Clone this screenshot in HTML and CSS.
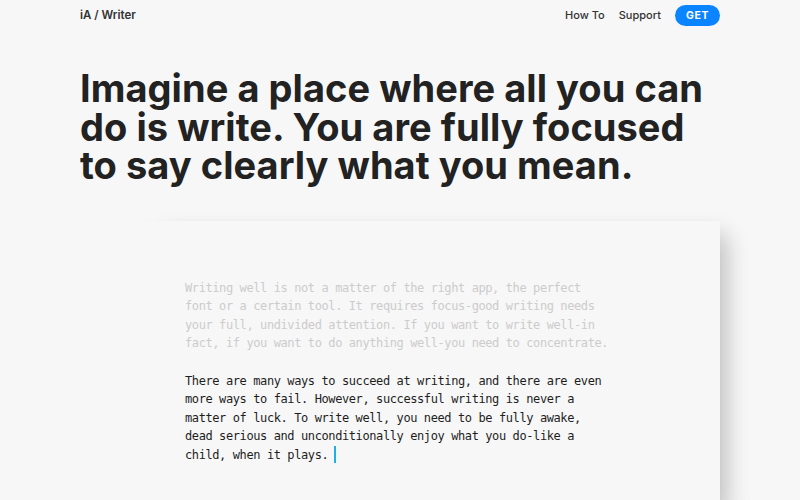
FILE: index.html
```html
<!DOCTYPE html>
<html lang="en">
<head>
  <meta charset="UTF-8" />
  <meta name="viewport" content="width=device-width, initial-scale=1.0"/>
  <title>iA Writer</title>
  <link rel="stylesheet" href="styles.css">
</head>
<body>
  <header class="topbar">
    <a class="brand" href="#">iA / Writer</a>
    <nav class="menu">
      <a href="#">How To</a>
      <a href="#">Support</a>
      <a class="get" href="#">GET</a>
    </nav>
  </header>

  <h1 class="headline">Imagine a place where all you can do is write. You are fully focused to say clearly what you mean.</h1>

  <section class="sheet">
    <div class="doc">
      <p class="faded">Writing well is not a matter of the right app, the perfect font or a certain tool. It requires focus-good writing needs your full, undivided attention. If you want to write well-in fact, if you want to do anything well-you need to concentrate.</p>
      <p class="current">There are many ways to succeed at writing, and there are even more ways to fail. However, successful writing is never a matter of luck. To write well, you need to be fully awake, dead serious and unconditionally enjoy what you do-like a child, when it plays.<span class="caret"></span></p>
    </div>
  </section>
</body>
</html>
```

FILE: styles.css
```css
body {
  margin: 0;
  background: #f7f7f7;
  color: #222;
  font-family: Inter, "Noto Sans", sans-serif;
  overflow: hidden;
}

a {
  color: inherit;
  text-decoration: none;
}

.topbar {
  display: flex;
  justify-content: space-between;
  align-items: center;
  padding: 5px 80px 0;
  height: 20px;
}

.brand {
  font-size: 11.5px;
  font-weight: 600;
  color: #333;
}

.menu {
  display: flex;
  align-items: center;
  gap: 14px;
  font-size: 11px;
  font-weight: 500;
  color: #333;
}

.get {
  background: #0a84ff;
  color: #fff;
  font-weight: 700;
  font-size: 10.5px;
  letter-spacing: 0.6px;
  padding: 0 11px;
  height: 21px;
  line-height: 21px;
  border-radius: 11px;
}

.headline {
  margin: 44px 80px 0;
  font-size: 38px;
  line-height: 38.5px;
  font-weight: 700;
  letter-spacing: 0.05px;
  color: #222;
}

/* the editor page, lit from the left */
.sheet {
  margin: 36px 80px 0 140px;
  height: 300px;
  background: #f7f7f7;
  box-shadow: 16px 4px 22px -10px rgba(0, 0, 0, 0.24), 0 -1px 3px rgba(0, 0, 0, 0.01);
}

.doc {
  padding: 58px 45px 0;
  font-family: "DejaVu Sans Mono", "Liberation Mono", monospace;
  font-size: 12px;
  letter-spacing: -0.4px;
  line-height: 18.5px;
}

/* 62 columns per line */
.doc p {
  margin: 0 0 19px;
  width: 426px;
}

.faded {
  color: #cccccc;
}

.current {
  color: #1e1e1e;
}

.caret {
  display: inline-block;
  width: 2px;
  height: 17px;
  margin-left: 6px;
  vertical-align: -4px;
  background: #1fb0ea;
}
```
